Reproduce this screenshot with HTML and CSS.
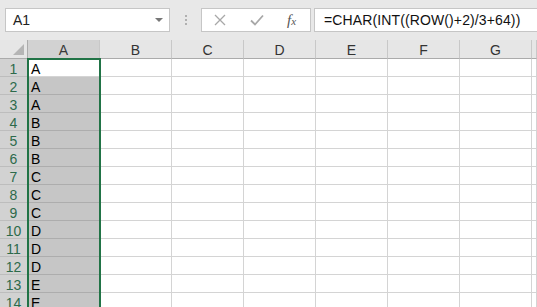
FILE: index.html
```html
<!DOCTYPE html>
<html>
<head>
<meta charset="utf-8">
<link rel="stylesheet" href="styles.css">
</head>
<body>
<div class="toolbar">
  <div class="namebox"><span class="ref">A1</span><span class="caret"></span></div>
  <div class="dots"><i></i><i></i><i></i></div>
  <div class="buttons">
    <svg class="btn-x" width="12" height="12" viewBox="0 0 12 12"><path d="M1 1L11 11M11 1L1 11" stroke="#a8a8a8" stroke-width="1.3" fill="none"/></svg>
    <svg class="btn-ok" width="14" height="12" viewBox="0 0 14 12"><path d="M1 6.5L5 10.5L13 1.5" stroke="#a8a8a8" stroke-width="1.8" fill="none"/></svg>
    <span class="fx">f<small>x</small></span>
  </div>
  <div class="formula">=CHAR(INT((ROW()+2)/3+64))</div>
</div>
<div class="sheet">
  <div class="corner"><span class="tri"></span></div>
  <div class="colhead sel">A</div>
  <div class="colhead">B</div>
  <div class="colhead">C</div>
  <div class="colhead">D</div>
  <div class="colhead">E</div>
  <div class="colhead">F</div>
  <div class="colhead">G</div>
  <div class="colhead"></div>

  <div class="rowhead">1</div><div class="cell active">A</div><div class="cell"></div><div class="cell"></div><div class="cell"></div><div class="cell"></div><div class="cell"></div><div class="cell"></div><div class="cell"></div>
  <div class="rowhead">2</div><div class="cell selc">A</div><div class="cell"></div><div class="cell"></div><div class="cell"></div><div class="cell"></div><div class="cell"></div><div class="cell"></div><div class="cell"></div>
  <div class="rowhead">3</div><div class="cell selc">A</div><div class="cell"></div><div class="cell"></div><div class="cell"></div><div class="cell"></div><div class="cell"></div><div class="cell"></div><div class="cell"></div>
  <div class="rowhead">4</div><div class="cell selc">B</div><div class="cell"></div><div class="cell"></div><div class="cell"></div><div class="cell"></div><div class="cell"></div><div class="cell"></div><div class="cell"></div>
  <div class="rowhead">5</div><div class="cell selc">B</div><div class="cell"></div><div class="cell"></div><div class="cell"></div><div class="cell"></div><div class="cell"></div><div class="cell"></div><div class="cell"></div>
  <div class="rowhead">6</div><div class="cell selc">B</div><div class="cell"></div><div class="cell"></div><div class="cell"></div><div class="cell"></div><div class="cell"></div><div class="cell"></div><div class="cell"></div>
  <div class="rowhead">7</div><div class="cell selc">C</div><div class="cell"></div><div class="cell"></div><div class="cell"></div><div class="cell"></div><div class="cell"></div><div class="cell"></div><div class="cell"></div>
  <div class="rowhead">8</div><div class="cell selc">C</div><div class="cell"></div><div class="cell"></div><div class="cell"></div><div class="cell"></div><div class="cell"></div><div class="cell"></div><div class="cell"></div>
  <div class="rowhead">9</div><div class="cell selc">C</div><div class="cell"></div><div class="cell"></div><div class="cell"></div><div class="cell"></div><div class="cell"></div><div class="cell"></div><div class="cell"></div>
  <div class="rowhead">10</div><div class="cell selc">D</div><div class="cell"></div><div class="cell"></div><div class="cell"></div><div class="cell"></div><div class="cell"></div><div class="cell"></div><div class="cell"></div>
  <div class="rowhead">11</div><div class="cell selc">D</div><div class="cell"></div><div class="cell"></div><div class="cell"></div><div class="cell"></div><div class="cell"></div><div class="cell"></div><div class="cell"></div>
  <div class="rowhead">12</div><div class="cell selc">D</div><div class="cell"></div><div class="cell"></div><div class="cell"></div><div class="cell"></div><div class="cell"></div><div class="cell"></div><div class="cell"></div>
  <div class="rowhead">13</div><div class="cell selc">E</div><div class="cell"></div><div class="cell"></div><div class="cell"></div><div class="cell"></div><div class="cell"></div><div class="cell"></div><div class="cell"></div>
  <div class="rowhead">14</div><div class="cell selc">E</div><div class="cell"></div><div class="cell"></div><div class="cell"></div><div class="cell"></div><div class="cell"></div><div class="cell"></div><div class="cell"></div>

  <div class="selection"></div>
</div>
</body>
</html>
```
FILE: styles.css
```css
html, body {
  margin: 0;
  padding: 0;
}
body {
  width: 537px;
  height: 307px;
  overflow: hidden;
  background: #ffffff;
  font-family: "Liberation Sans", "Noto Sans CJK JP", sans-serif;
  color: #000;
}

/* formula bar */
.toolbar {
  height: 40px;
  box-sizing: border-box;
  padding-top: 8px;
  background: #e8e8e8;
  display: flex;
  align-items: flex-start;
}
.namebox {
  margin-left: 5px;
  width: 165px;
  height: 24px;
  box-sizing: border-box;
  background: #fff;
  border: 1px solid #c6c6c6;
  display: flex;
  align-items: center;
  padding-left: 7px;
  font-size: 14px;
  color: #222;
}
.caret {
  margin-left: auto;
  margin-right: 6px;
  width: 0;
  height: 0;
  border-left: 4px solid transparent;
  border-right: 4px solid transparent;
  border-top: 4px solid #777;
}
.dots {
  width: 31px;
  height: 24px;
  display: flex;
  flex-direction: column;
  align-items: center;
  justify-content: center;
  gap: 2px;
}
.dots i {
  display: block;
  width: 2px;
  height: 2px;
  background: #b0b0b0;
}
.buttons {
  width: 110px;
  height: 24px;
  box-sizing: border-box;
  background: #fff;
  border: 1px solid #c6c6c6;
  display: flex;
  align-items: center;
  padding-left: 12px;
}
.btn-x { margin-right: 24px; }
.btn-ok { margin-right: 23px; }
.fx {
  font-family: "Liberation Serif", serif;
  font-style: italic;
  font-size: 15px;
  color: #555;
}
.fx small {
  font-size: 11px;
}
.formula {
  flex: 1;
  margin-left: 3px;
  height: 24px;
  box-sizing: border-box;
  background: #fff;
  border: 1px solid #c6c6c6;
  border-right: none;
  padding-left: 9px;
  font-size: 14px;
  letter-spacing: 0.12px;
  line-height: 22px;
  color: #111;
  white-space: nowrap;
}

/* sheet grid */
.sheet {
  position: relative;
  display: grid;
  grid-template-columns: 28px repeat(7, 72px) 1fr;
  grid-auto-rows: 18px;
  grid-template-rows: 19px;
  font-size: 14px;
}
.corner,
.colhead {
  background: #e6e6e6;
  box-sizing: border-box;
  border-bottom: 1px solid #ababab;
  border-right: 1px solid #c8c8c8;
  display: flex;
  align-items: center;
  justify-content: center;
  padding-top: 1px;
  color: #333;
}
.corner {
  position: relative;
  border-right: 1px solid #ababab;
}
.tri {
  position: absolute;
  right: 3px;
  bottom: 3px;
  width: 0;
  height: 0;
  border-left: 11px solid transparent;
  border-bottom: 11px solid #b5b5b5;
}
.colhead.sel {
  background: #d2d2d2;
  color: #3a3a3a;
}
.rowhead {
  background: #d2d2d2;
  box-sizing: border-box;
  border-right: 1px solid #ababab;
  border-bottom: 1px solid #bdbdbd;
  display: flex;
  align-items: center;
  justify-content: center;
  padding-top: 2px;
  color: #2d6a4b;
}
.cell {
  box-sizing: border-box;
  border-right: 1px solid #d4d4d4;
  border-bottom: 1px solid #d4d4d4;
  padding-left: 3px;
  padding-top: 2px;
  line-height: 16px;
  white-space: nowrap;
  overflow: hidden;
}
.cell.selc {
  background: #c6c6c6;
  border-bottom-color: #adadad;
  border-right-color: #c6c6c6;
}
.selection {
  position: absolute;
  left: 27px;
  top: 18px;
  width: 74px;
  height: 300px;
  box-sizing: border-box;
  border: 2px solid #217346;
  pointer-events: none;
}
```
